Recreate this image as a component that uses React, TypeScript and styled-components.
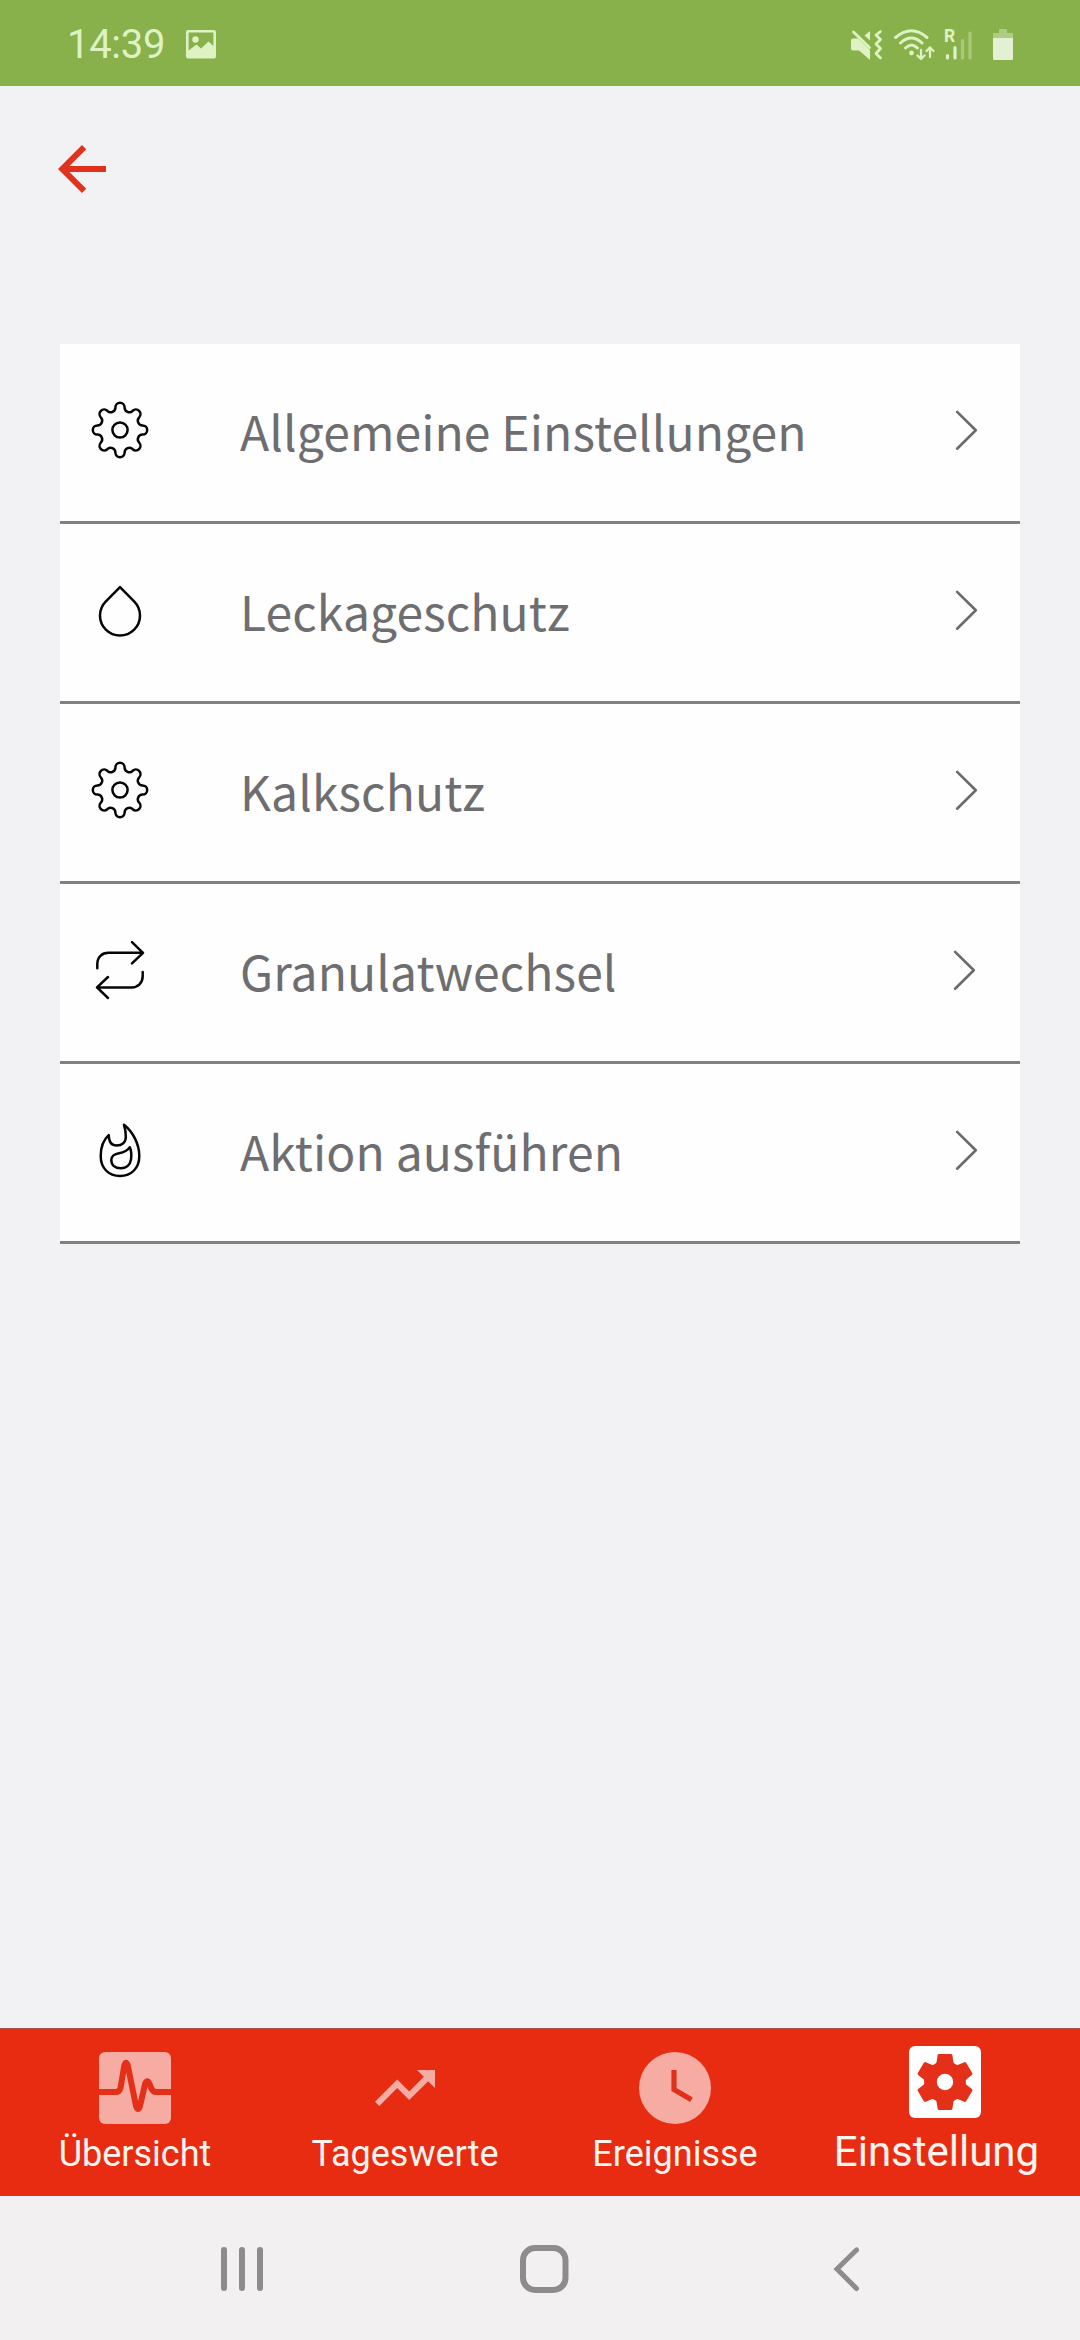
import React from "react";
import styled, { createGlobalStyle } from "styled-components";

const GlobalStyle = createGlobalStyle`
  *, *::before, *::after { box-sizing: border-box; }
  html, body { margin: 0; padding: 0; background: #f2f1f3; }
  svg { display: block; flex: none; }
`;

const Screen = styled.div`
  display: flex;
  flex-direction: column;
  width: 1080px;
  height: 2340px;
  overflow: hidden;
  background: #f2f1f3;
  font-family: Roboto, "Noto Sans", sans-serif;
`;

const StatusBar = styled.header`
  display: flex;
  align-items: center;
  justify-content: space-between;
  height: 86px;
  padding: 3px 67px 0 67px;
  background: #88b04b;
  color: #def2c3;
`;

const StatusGroup = styled.div<{ $gap: number }>`
  display: flex;
  align-items: center;
  gap: ${(p) => p.$gap}px;
`;

const BatterySlot = styled.div`
  padding-left: 10px;
`;

const Clock = styled.span`
  width: 98px;
  font-size: 40px;
  line-height: 48px;
  letter-spacing: -0.3px;
  white-space: nowrap;
`;

const AppBar = styled.div`
  display: flex;
  height: 258px;
  padding: 47px 0 0 46px;
`;

const PlainButton = styled.button`
  display: flex;
  align-items: center;
  justify-content: center;
  padding: 0;
  border: 0;
  background: none;
`;

const BackButton = styled(PlainButton)`
  width: 72px;
  height: 72px;
`;

const Content = styled.main`
  flex: 1;
`;

const MenuList = styled.ul`
  margin: 0 60px;
  padding: 0;
  list-style: none;
`;

const MenuRow = styled.li<{ $shift?: number }>`
  display: flex;
  align-items: center;
  height: 180px;
  padding: 0 ${(p) => 42 + (p.$shift ?? 0)}px 5px 30px;
  border-bottom: 3px solid #818182;
  background: #fefeff;
`;

const MenuLabel = styled.span`
  flex: 1;
  padding-left: 90px;
  color: #6e6d6f;
  font-family: "Noto Sans CJK SC", "Noto Sans", sans-serif;
  font-size: 48px;
  line-height: 72px;
  letter-spacing: 0.1px;
  white-space: nowrap;
`;

const TabBar = styled.nav`
  display: grid;
  grid-template-columns: repeat(4, 270px);
  height: 168px;
  border-top: 1px solid #b5524a;
  background: #e82c12;
`;

const Tab = styled.div<{ $active?: boolean }>`
  display: flex;
  flex-direction: column;
  align-items: center;
  padding-top: ${(p) => (p.$active ? 17 : 23)}px;
  color: ${(p) => (p.$active ? "#ffffff" : "#f7aca3")};
`;

const TabLabel = styled.span<{ $active?: boolean }>`
  margin-top: ${(p) => (p.$active ? 9 : 8)}px;
  padding-right: ${(p) => (p.$active ? 17 : 0)}px;
  color: #fff4ee;
  font-size: ${(p) => (p.$active ? 42 : 36)}px;
  line-height: ${(p) => (p.$active ? 50 : 44)}px;
  white-space: nowrap;
`;

const SystemNav = styled.footer`
  display: flex;
  align-items: center;
  height: 144px;
  padding: 2px 0 0 212px;
  gap: 242px;
  background: #f2f0f1;
`;

const NavButton = styled(PlainButton)`
  width: 60px;
  height: 60px;
`;

const LineIcon = ({ children }: { children: React.ReactNode }) => (
  <svg width="60" height="60" viewBox="0 0 60 60" fill="none" stroke="#050506" strokeWidth="2.500" strokeLinecap="round" strokeLinejoin="round">
    {children}
  </svg>
);

const CogOutline = () => {
  const r = 4.6;
  const base = 22.6;
  const rotate = (x: number, y: number, a: number) =>
    `${(30 + x * Math.cos(a) - y * Math.sin(a)).toFixed(2)} ${(30 + x * Math.sin(a) + y * Math.cos(a)).toFixed(2)}`;
  const step = Math.PI / 4;
  const chord = 2 * (base * Math.sin(step / 2) - r * Math.cos(step / 2));
  const valley = chord / 2 / Math.sin((67.5 * Math.PI) / 180);
  let d = `M${rotate(-r, -base, 0)}`;
  for (let i = 0; i < 8; i++) {
    d += `A${r} ${r} 0 0 1 ${rotate(r, -base, i * step)}`;
    d += `A${valley} ${valley} 0 0 0 ${rotate(-r, -base, (i + 1) * step)}`;
  }
  return (
    <LineIcon>
      <path d={d + "Z"} />
      <circle cx="30" cy="30" r="7.600" />
    </LineIcon>
  );
};

const Drop = () => (
  <LineIcon>
    <path d="M30 7.200L15.900 21.400A20 20 0 1 0 44.100 21.400Z" />
  </LineIcon>
);

const Repeat = () => (
  <LineIcon>
    <path d="M7.300 28.300V24C7.300 17 12 12.800 18.500 12.800H53M42 2.200L53 12.800L42 23.400M52.700 31.900V36C52.700 43 48 47.400 41.500 47.400H7M18 37L7 47.400L18 58" />
  </LineIcon>
);

const Flame = () => (
  <LineIcon>
    <path d="M34 4.800C43 12 49.300 24 49.300 36C49.300 48 41.500 56 30 56C18.500 56 10.700 48 10.700 36C10.700 27.500 14 19.500 18.700 15.200C18.900 21.500 21.500 25.500 26.700 25.500C32 25.500 35.700 22.500 35.800 17C35.800 12 35.200 8.500 34 4.800Z" />
    <path d="M39.800 27.200C41.500 31 41.500 36 41 39.500C40.200 45 36 48.300 30.700 48.300C25 48.300 21.300 45 21.300 40C21.300 36.500 24.500 33.800 29 33.200C33.500 32.500 37.500 30.800 39.800 27.200Z" />
  </LineIcon>
);

const Chevron = () => (
  <svg width="24" height="42" viewBox="0 0 24 42" fill="none" stroke="#6a696b" strokeWidth="2.600" strokeLinecap="round" strokeLinejoin="round">
    <path d="M3.100 2.900L21.800 21.300L3.100 39.700" />
  </svg>
);

const ArrowBack = () => (
  <svg width="72" height="72" viewBox="0 0 24 24" fill="#e0321c">
    <path d="M20 11H7.830l5.590-5.590L12 4l-8 8 8 8 1.410-1.410L7.830 13H20v-2z" />
  </svg>
);

const Picture = () => (
  <svg width="30" height="29" viewBox="0 0 30 29">
    <path fill="currentColor" fillRule="evenodd" d="M2 0H28A2 2 0 0 1 30 2V26.500A2 2 0 0 1 28 28.500H2A2 2 0 0 1 0 26.500V2A2 2 0 0 1 2 0ZM2.600 2.600V20.500L10.500 14.500L15 18.500L22.500 11.500L27.400 16V2.600ZM9.500 6.300A3.200 3.200 0 1 1 9.500 12.700A3.200 3.200 0 1 1 9.500 6.300Z" />
  </svg>
);

const MutedVibrate = () => (
  <svg width="33" height="32" viewBox="0 0 33 32" fill="none" stroke="currentColor">
    <path fill="currentColor" stroke="none" d="M1 11.500Q1 9.500 3 9.500H8L20 21V31L9 21.500H3Q1 21.500 1 19.500ZM20 2V11.500L14.500 6.500Z" />
    <path strokeWidth="2.800" strokeLinecap="round" d="M3.500 3L19.500 18.500" />
    <path strokeWidth="2.800" strokeLinejoin="round" strokeLinecap="round" d="M30.500 2.500L26 6L30.500 10.500L26 15L30.500 19.500L26 24.500L30.500 29" />
  </svg>
);

const Wifi = () => (
  <svg width="42" height="32" viewBox="0 0 42 32" fill="none" stroke="currentColor" strokeWidth="3" strokeLinecap="round">
    <path d="M2.500 8.500Q18.500 -5 34 8.500M7.500 14Q18.500 4 29 14M12.500 19Q18.500 13 24.500 19" />
    <circle cx="18.500" cy="24" r="2.400" fill="currentColor" stroke="none" />
    <path strokeWidth="2.300" strokeLinejoin="round" d="M28 21V30M24.500 26.500L28 30L31.500 26.500M37 28V18.500M33.500 22L37 18.500L40.500 22" />
  </svg>
);

const SignalWrap = styled.div`
  position: relative;
  width: 29px;
  height: 32px;
`;

const Roaming = styled.span`
  position: absolute;
  left: 0;
  top: -3px;
  font-size: 17.5px;
  font-weight: 700;
  line-height: 20px;
`;

const Signal = () => (
  <SignalWrap>
    <Roaming>R</Roaming>
    <svg width="29" height="32" viewBox="0 0 29 32" fill="none" stroke="currentColor" strokeWidth="3.200" strokeLinecap="round">
      <path d="M3.500 26.500V29M11 18.500V29" />
      <path opacity="0.4" d="M18.500 11.500V29M26 4V29" />
    </svg>
  </SignalWrap>
);

const Battery = () => (
  <svg width="20" height="32" viewBox="0 0 20 32" fill="currentColor">
    <path opacity="0.45" d="M6 1Q6 0 7 0H13Q14 0 14 1V4H20V9H0V4H6Z" />
    <path fill="#e4f0d3" d="M0 9H20V30Q20 31 19 31H1Q0 31 0 30Z" />
  </svg>
);

const Pulse = () => (
  <svg width="72" height="72" viewBox="0 0 72 72">
    <rect width="72" height="72" rx="6" fill="currentColor" />
    <path fill="none" stroke="#e43019" strokeWidth="6" strokeLinejoin="round" d="M0 40H17Q20.500 40 21.500 36L25.300 13.500Q27 8 28.800 13.500L37 54Q39 60 41 54L46.200 31.500Q48.300 27 50.300 31.500L52 35.500Q53.500 40 57 40H72" />
  </svg>
);

const Trend = () => (
  <svg width="72" height="72" viewBox="0 0 24 24" fill="currentColor">
    <path d="M16 6l2.290 2.290-4.880 4.880-4-4L2 16.590 3.410 18l6-6 4 4 6.300-6.290L22 12V6z" />
  </svg>
);

const ClockFace = () => (
  <svg width="72" height="72" viewBox="0 0 72 72">
    <circle cx="36" cy="36" r="36" fill="currentColor" />
    <path fill="none" stroke="#e02f1a" strokeWidth="5.200" d="M35 18V37.500L52.500 47.800" />
  </svg>
);

const CogSquare = () => (
  <svg width="72" height="72" viewBox="0 0 72 72">
    <rect width="72" height="72" rx="6" fill="currentColor" />
    <g fill="#e53019">
      <circle cx="36" cy="36" r="20.600" />
      {[0, 60, 120, 180, 240, 300].map((a) => (
        <path key={a} transform={`rotate(${a} 36 36)`} d="M29.800 8H42.200L43.300 8.800L44.500 16.500L48.500 21L36 36L23.500 21L27.500 16.500L28.700 8.800Z" />
      ))}
    </g>
    <circle cx="36" cy="36" r="8.200" fill="currentColor" />
  </svg>
);

const Recents = () => (
  <svg width="60" height="60" viewBox="0 0 60 60" fill="none" stroke="#8d8c8d" strokeWidth="6" strokeLinecap="round">
    <path d="M12 11V49M30 11V49M48 11V49" />
  </svg>
);

const Home = () => (
  <svg width="60" height="60" viewBox="0 0 60 60" fill="none" stroke="#8d8c8d" strokeWidth="6">
    <rect x="9" y="9" width="42.500" height="42" rx="12" />
  </svg>
);

const NavBack = () => (
  <svg width="60" height="60" viewBox="0 0 60 60" fill="none" stroke="#8d8c8d" strokeWidth="5" strokeLinecap="round">
    <path d="M40.500 11L21 30L40.500 49.500" />
  </svg>
);

const items = [
  { label: "Allgemeine Einstellungen", Icon: CogOutline },
  { label: "Leckageschutz", Icon: Drop },
  { label: "Kalkschutz", Icon: CogOutline },
  { label: "Granulatwechsel", Icon: Repeat, shift: 2 },
  { label: "Aktion ausführen", Icon: Flame },
];

const tabs = [
  { label: "Übersicht", Icon: Pulse },
  { label: "Tageswerte", Icon: Trend },
  { label: "Ereignisse", Icon: ClockFace },
  { label: "Einstellung", Icon: CogSquare, active: true },
];

export default function App() {
  return (
    <Screen>
      <GlobalStyle />
      <StatusBar>
        <StatusGroup $gap={21}>
          <Clock>14:39</Clock>
          <Picture />
        </StatusGroup>
        <StatusGroup $gap={10}>
          <StatusGroup $gap={10}>
            <MutedVibrate />
            <StatusGroup $gap={9}>
              <Wifi />
              <Signal />
            </StatusGroup>
          </StatusGroup>
          <BatterySlot>
            <Battery />
          </BatterySlot>
        </StatusGroup>
      </StatusBar>
      <AppBar>
        <BackButton aria-label="Zurück">
          <ArrowBack />
        </BackButton>
      </AppBar>
      <Content>
        <MenuList>
          {items.map(({ label, Icon, shift }) => (
            <MenuRow key={label} $shift={shift}>
              <Icon />
              <MenuLabel>{label}</MenuLabel>
              <Chevron />
            </MenuRow>
          ))}
        </MenuList>
      </Content>
      <TabBar>
        {tabs.map(({ label, Icon, active }) => (
          <Tab key={label} $active={active}>
            <Icon />
            <TabLabel $active={active}>{label}</TabLabel>
          </Tab>
        ))}
      </TabBar>
      <SystemNav>
        <NavButton aria-label="Letzte Apps">
          <Recents />
        </NavButton>
        <NavButton aria-label="Startbildschirm">
          <Home />
        </NavButton>
        <NavButton aria-label="Zurück">
          <NavBack />
        </NavButton>
      </SystemNav>
    </Screen>
  );
}
